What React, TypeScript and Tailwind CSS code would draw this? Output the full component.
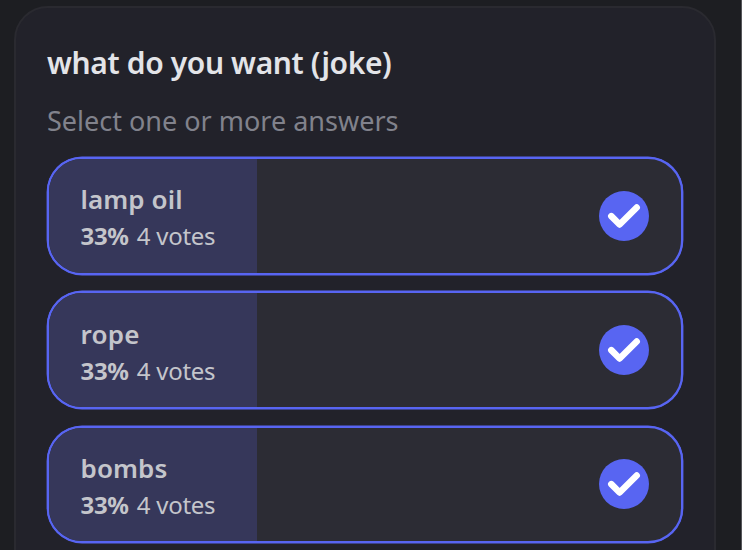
type Answer = {
  label: string;
  percent: number;
  votes: number;
  tracking: string;
};

const answers: Answer[] = [
  { label: "lamp oil", percent: 33, votes: 4, tracking: "tracking-[0.1px]" },
  { label: "rope", percent: 33, votes: 4, tracking: "tracking-[0.2px]" },
  { label: "bombs", percent: 33, votes: 4, tracking: "tracking-[0.1px]" },
];

function CheckBadge() {
  return (
    <svg viewBox="0 0 50 50" className="size-[50px] shrink-0">
      <circle cx="25" cy="25" r="25" fill="#5865f2" />
      <path
        d="M12.3 25.1 L20.6 33.5 L37.7 16.5"
        fill="none"
        stroke="#fff"
        strokeWidth="6.5"
        strokeLinecap="round"
        strokeLinejoin="round"
      />
    </svg>
  );
}

function AnswerRow({ answer }: { answer: Answer }) {
  return (
    <button
      type="button"
      className="grid h-[117.6px] w-full shrink-0 overflow-hidden rounded-[35px] border-2 border-[#5865f2] bg-[#2c2c34] text-left text-[#c4c5cb] shadow-[0_0_0_0.4px_#5865f2]"
    >
      <div
        className="col-start-1 row-start-1 bg-[#36375a]"
        style={{ width: `${answer.percent - 0.1}%` }}
      />
      <div className="col-start-1 row-start-1 flex items-center justify-between pr-8 pl-[31.5px]">
        <div className="flex flex-col pt-[3px]">
          <span className={`text-[26px] leading-[38px] font-semibold ${answer.tracking}`}>
            {answer.label}
          </span>
          <span className="flex gap-2 text-[24px] leading-[36px]">
            <span className="font-bold tracking-[-0.3px]">{answer.percent}%</span>
            <span className="tracking-[-0.25px]">{answer.votes} votes</span>
          </span>
        </div>
        <CheckBadge />
      </div>
    </button>
  );
}

export default function App() {
  return (
    <div className="flex h-[550px] w-[742px] overflow-hidden border-r border-[#55565a] bg-[#1d1e22] pt-[6px] pl-[14px] font-['Noto_Sans',sans-serif]">
      <div className="flex h-[620px] w-[702px] shrink-0 flex-col rounded-[34px] border-2 border-[#2a2a30] bg-[#22222a] px-[31px] pt-[34px]">
        <h1 className="text-[30px] leading-[42px] font-semibold tracking-[-0.37px] whitespace-nowrap text-[#e3e4e8]">
          what do you want (joke)
        </h1>
        <p className="mt-[17px] text-[27px] leading-[40px] whitespace-nowrap text-[#81828c]">
          Select one or more answers
        </p>
        <div className="mt-[16px] flex flex-col gap-[16.7px]">
          {answers.map((answer) => (
            <AnswerRow key={answer.label} answer={answer} />
          ))}
        </div>
      </div>
    </div>
  );
}
